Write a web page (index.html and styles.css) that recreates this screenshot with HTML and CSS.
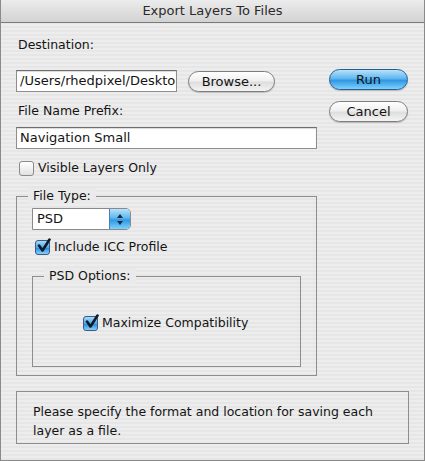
FILE: index.html
```html
<!DOCTYPE html>
<html>
<head>
<meta charset="utf-8">
<link rel="stylesheet" href="styles.css">
</head>
<body>
<div class="window">
  <div class="titlebar">Export Layers To Files</div>
  <div class="content">
    <div class="top">
      <div class="left">
        <div class="label first">Destination:</div>
        <div class="row">
          <div class="field dest">/Users/rhedpixel/Desktop</div>
          <div class="btn browse">Browse...</div>
        </div>
        <div class="label">File Name Prefix:</div>
        <div class="field prefix">Navigation Small</div>
        <div class="check-row visible">
          <span class="cb"></span><span>Visible Layers Only</span>
        </div>
      </div>
      <div class="right">
        <div class="btn run">Run</div>
        <div class="btn cancel">Cancel</div>
      </div>
    </div>
    <div class="group filetype">
      <div class="legend">File Type:</div>
      <div class="select">
        <span class="select-text">PSD</span>
        <span class="stepper">
          <svg width="20" height="21" viewBox="0 0 20 21"><path d="M10 5 L7 9 H13 Z M10 16 L7 12 H13 Z" fill="#1a2a40"/></svg>
        </span>
      </div>
      <div class="check-row icc">
        <span class="cb checked"><svg width="16" height="16" viewBox="0 0 16 16"><path d="M3 7.5 L6.5 12.5 L13.5 1.5" fill="none" stroke="#0d1b2a" stroke-width="2.6" stroke-linecap="round" stroke-linejoin="round"/></svg></span><span>Include ICC Profile</span>
      </div>
      <div class="group psd">
        <div class="legend">PSD Options:</div>
        <div class="check-row maxc">
          <span class="cb checked"><svg width="16" height="16" viewBox="0 0 16 16"><path d="M3 7.5 L6.5 12.5 L13.5 1.5" fill="none" stroke="#0d1b2a" stroke-width="2.6" stroke-linecap="round" stroke-linejoin="round"/></svg></span><span>Maximize Compatibility</span>
        </div>
      </div>
    </div>
    <div class="info">Please specify the format and location for saving each layer as a file.</div>
  </div>
</div>
</body>
</html>
```
FILE: styles.css
```css
* { box-sizing: border-box; }
html, body { margin: 0; padding: 0; }
body {
  font-family: "DejaVu Sans", "Liberation Sans", sans-serif;
  font-size: 12.5px;
  color: #141414;
  background: #ececec;
}
.window {
  width: 425px;
  height: 461px;
  border: 1px solid #8a8a8a;
  border-top: none;
  background: repeating-linear-gradient(to bottom, #ededed 0, #ededed 2px, #e6e6e6 2px, #e6e6e6 4px);
  overflow: hidden;
}
.titlebar {
  height: 23px;
  line-height: 22px;
  text-align: center;
  font-size: 13px;
  color: #2a2a2a;
  background: linear-gradient(to bottom, #ececec, #d2d2d2);
  border-bottom: 1px solid #7a7a7a;
  border-radius: 4px 4px 0 0;
}
.content {
  padding: 0 16px 0 15px;
}
.top {
  display: flex;
  justify-content: space-between;
}
.left { width: 301px; }
.right {
  width: 79px;
  padding-top: 46px;
  display: flex;
  flex-direction: column;
  gap: 11px;
}
.label { line-height: 16px; margin: 11px 0 8px 2px; }
.label.first { margin-top: 14px; margin-bottom: 17px; }
.row { display: flex; gap: 11px; align-items: center; }
.field {
  height: 22px;
  line-height: 20px;
  padding: 0 3px;
  background: #fff;
  border: 1px solid #8e8e8e;
  border-top-color: #6e6e6e;
  box-shadow: inset 0 1px 1px rgba(0,0,0,0.15);
  white-space: nowrap;
  overflow: hidden;
  font-size: 13px;
}
.dest { width: 161px; }
.prefix { width: 301px; }
.btn {
  height: 21px;
  line-height: 19px;
  text-align: center;
  border-radius: 11px;
  border: 1px solid #7d7d7d;
  background: linear-gradient(to bottom, #ffffff 0%, #f0f0f0 45%, #dedede 55%, #f4f4f4 100%);
  box-shadow: 0 1px 1px rgba(0,0,0,0.2);
  font-size: 13px;
}
.browse { width: 87px; }
.run {
  border-color: #2a5c94;
  background: linear-gradient(to bottom, #b7e2fb 0%, #5eb6ef 45%, #2f97e3 55%, #7fd2fc 100%);
}
.check-row { display: flex; align-items: center; gap: 4px; line-height: 16px; }
.cb {
  width: 15px;
  height: 15px;
  border: 1px solid #8a8a8a;
  border-radius: 3px;
  background: linear-gradient(to bottom, #ffffff, #e2e2e2);
  position: relative;
  flex: none;
}
.cb.checked {
  border-color: #3a5c8a;
  background: linear-gradient(to bottom, #a9d9f7 0%, #4fa9e7 50%, #2b8ddc 55%, #8ad0f7 100%);
}
.cb svg { position: absolute; left: 0; top: -3px; }
.visible { margin: 11px 0 0 3px; }
.group {
  border: 1px solid #8d8d8d;
  position: relative;
}
.legend {
  position: absolute;
  top: -9px;
  left: 11px;
  padding: 0 5px;
  line-height: 16px;
  background: #eaeaea;
}
.filetype {
  margin-top: 20px;
  width: 301px;
  height: 180px;
  padding: 11px 15px 0 15px;
}
.select {
  width: 99px;
  height: 22px;
  display: flex;
  border: 1px solid #8a8a8a;
  border-radius: 0 5px 5px 0;
  background: #fff;
}
.select-text { flex: 1; padding-left: 4px; line-height: 20px; font-size: 13px; }
.stepper {
  width: 21px;
  border-left: 1px solid #4a7fb5;
  border-radius: 0 4px 4px 0;
  background: linear-gradient(to bottom, #b7e2fb 0%, #5eb6ef 45%, #2f97e3 55%, #7fd2fc 100%);
}
.stepper svg { display: block; }
.icc { margin: 9px 0 0 3px; }
.psd {
  margin-top: 21px;
  width: 269px;
  height: 91px;
}
.maxc { margin: 38px 0 0 50px; }
.info {
  margin-top: 15px;
  width: 393px;
  height: 53px;
  border: 1px solid #8d8d8d;
  padding: 10px 16px 0 16px;
  line-height: 19px;
}
```
